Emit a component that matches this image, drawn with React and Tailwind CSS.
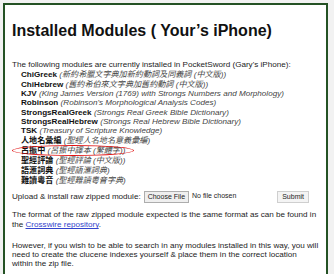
import React from 'react';

const modules = [
    { name: 'ChiGreek', desc: '新約希臘文字典加新約動詞及同義詞 (中文版)' },
    { name: 'ChiHebrew', desc: '舊約希伯來文字典加舊約動詞 (中文版)' },
    { name: 'KJV', desc: 'King James Version (1769) with Strongs Numbers and Morphology' },
    { name: 'Robinson', desc: "Robinson's Morphological Analysis Codes" },
    { name: 'StrongsRealGreek', desc: 'Strongs Real Greek Bible Dictionary' },
    { name: 'StrongsRealHebrew', desc: 'Strongs Real Hebrew Bible Dictionary' },
    { name: 'TSK', desc: 'Treasury of Scripture Knowledge' },
    { name: '人地名彙編', desc: '聖經人名地名意義彙編', tall: true },
    { name: '呂振中', desc: '呂振中譯本 (繁體字)', tall: true },
    { name: '聖經評論', desc: '聖經評論 (中文版)', tall: true },
    { name: '語滙詞典', desc: '聖經語滙詞典', tall: true },
    { name: '難讀粵音', desc: '聖經難讀粵音字典', tall: true },
];

export default function App() {
    return (
        <div className="h-[274px] w-[334px] overflow-hidden bg-[#f2f2f2] pl-[3px] pt-[3px] font-['Liberation_Sans','Noto_Sans_CJK_TC',sans-serif] text-[#1c1c1c]">
            <div className="relative h-[300px] w-[325px] border-2 border-[#245224] bg-white px-[7px] pt-[16px]">
                <h1 className="text-[16px] font-bold leading-[20px] text-[#111]">Installed Modules ( Your’s iPhone)</h1>

                <p className="mt-[19px] whitespace-nowrap text-[8.1px] leading-[10px]">
                    The following modules are currently installed in PocketSword (Gary's iPhone):
                </p>

                <ul className="mt-[0.3px] pl-[9px] text-[8.1px]">
                    {modules.map(m => (
                        <li
                            key={m.name}
                            className={m.tall ? 'h-[10px] whitespace-nowrap leading-[10px]' : 'h-[9.35px] whitespace-nowrap leading-[9.35px]'}
                        >
                            <b className="text-[#111]">{m.name}</b>{' '}
                            <i className="text-[#444]">({m.desc})</i>
                        </li>
                    ))}
                </ul>

                {/* red marker drawn round the 呂振中 line */}
                <div className="absolute left-[7px] top-[140px] h-[11px] w-[122px] rounded-[50%] border-[1.5px] border-[#e01010]" />

                <div className="mt-[5px] flex h-[12px] items-center text-[8.1px]">
                    <span>Upload &amp; install raw zipped module:</span>
                    <button className="ml-[3px] h-[12px] border border-[#adadad] bg-[#efefef] px-[3px] text-[7px] leading-[10px] text-[#222]">Choose File</button>
                    <span className="ml-[3px] text-[7px]">No file chosen</span>
                    <button className="ml-auto mr-[10px] h-[12px] border border-[#cfcfcf] bg-[#f4f4f4] px-[4px] text-[7px] leading-[10px] text-[#222]">Submit</button>
                </div>

                <div className="mt-[7px] text-[8.1px] leading-[10.5px]">
                    <div className="whitespace-nowrap">The format of the raw zipped module expected is the same format as can be found in</div>
                    <div className="whitespace-nowrap">
                        the <a className="text-[#3344cc] underline">Crosswire repository</a>.
                    </div>
                </div>

                <p className="mt-[10px] text-[8.1px] leading-[9px]">
                    However, if you wish to be able to search in any modules installed in this way, you will need to create the clucene indexes yourself &amp; place them in the correct location within the zip file.
                </p>
            </div>
        </div>
    );
}
